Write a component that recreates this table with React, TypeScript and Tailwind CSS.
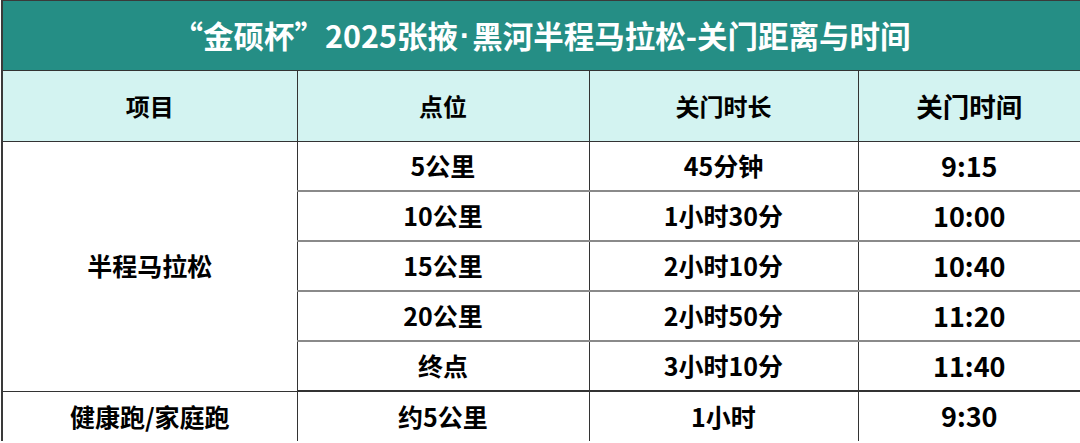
import React from "react";

const rows = [
  { point: "5公里", duration: "45分钟", time: "9:15" },
  { point: "10公里", duration: "1小时30分", time: "10:00" },
  { point: "15公里", duration: "2小时10分", time: "10:40" },
  { point: "20公里", duration: "2小时50分", time: "11:20" },
  { point: "终点", duration: "3小时10分", time: "11:40" },
];

const font = { fontFamily: '"Noto Sans CJK SC", "Noto Sans", sans-serif' };

export default function App() {
  return (
    <div className="w-[1080px] h-[443px] overflow-hidden bg-white pl-px" style={font}>
      <div className="border-l-2 border-t border-[#3a3a3a]">
        {/* title */}
        <div className="h-[70px] bg-[#258e85] flex items-center justify-center text-white font-bold text-[30.5px] border-b border-[#333]">
          “金硕杯”2025张掖
          <span className="font-['Liberation_Sans',sans-serif] px-[2px]">·</span>
          黑河半程马拉松-关门距离与时间
        </div>

        <table className="w-full table-fixed border-collapse text-black font-bold">
          <colgroup>
            <col className="w-[294px]" />
            <col className="w-[292px]" />
            <col className="w-[269px]" />
            <col />
          </colgroup>
          <thead>
            <tr className="h-[70px] bg-[#d3f3f1] text-[24px]">
              <th className="border-r border-b border-[#333]">项目</th>
              <th className="border-r border-b border-[#333]">点位</th>
              <th className="border-r border-b border-[#333]">关门时长</th>
              <th className="border-b border-[#333] text-[26.5px]">关门时间</th>
            </tr>
          </thead>
          <tbody>
            {rows.map((r, i) => (
              <tr key={r.point} className="h-[50px] text-[25px]">
                {i === 0 && (
                  <td rowSpan={5} className="text-center border-r border-b border-[#333]">
                    半程马拉松
                  </td>
                )}
                <td
                  className={
                    "text-center border-r border-[#333] " +
                    (i === 4 ? "border-b-2 border-b-[#333]" : "border-b-2 border-b-[#8a8a8a]")
                  }
                >
                  {r.point}
                </td>
                <td
                  className={
                    "text-center border-r border-[#333] " +
                    (i === 4 ? "border-b-2 border-b-[#333]" : "border-b-2 border-b-[#8a8a8a]")
                  }
                >
                  {r.duration}
                </td>
                <td
                  className={
                    "text-center text-[27px] " +
                    (i === 4 ? "border-b-2 border-b-[#333]" : "border-b-2 border-b-[#8a8a8a]")
                  }
                >
                  {r.time}
                </td>
              </tr>
            ))}
            <tr className="h-[50px] text-[25px]">
              <td className="text-center border-r border-[#333]">健康跑/家庭跑</td>
              <td className="text-center border-r border-[#333]">约5公里</td>
              <td className="text-center border-r border-[#333]">1小时</td>
              <td className="text-center text-[27px]">9:30</td>
            </tr>
          </tbody>
        </table>
      </div>
    </div>
  );
}
